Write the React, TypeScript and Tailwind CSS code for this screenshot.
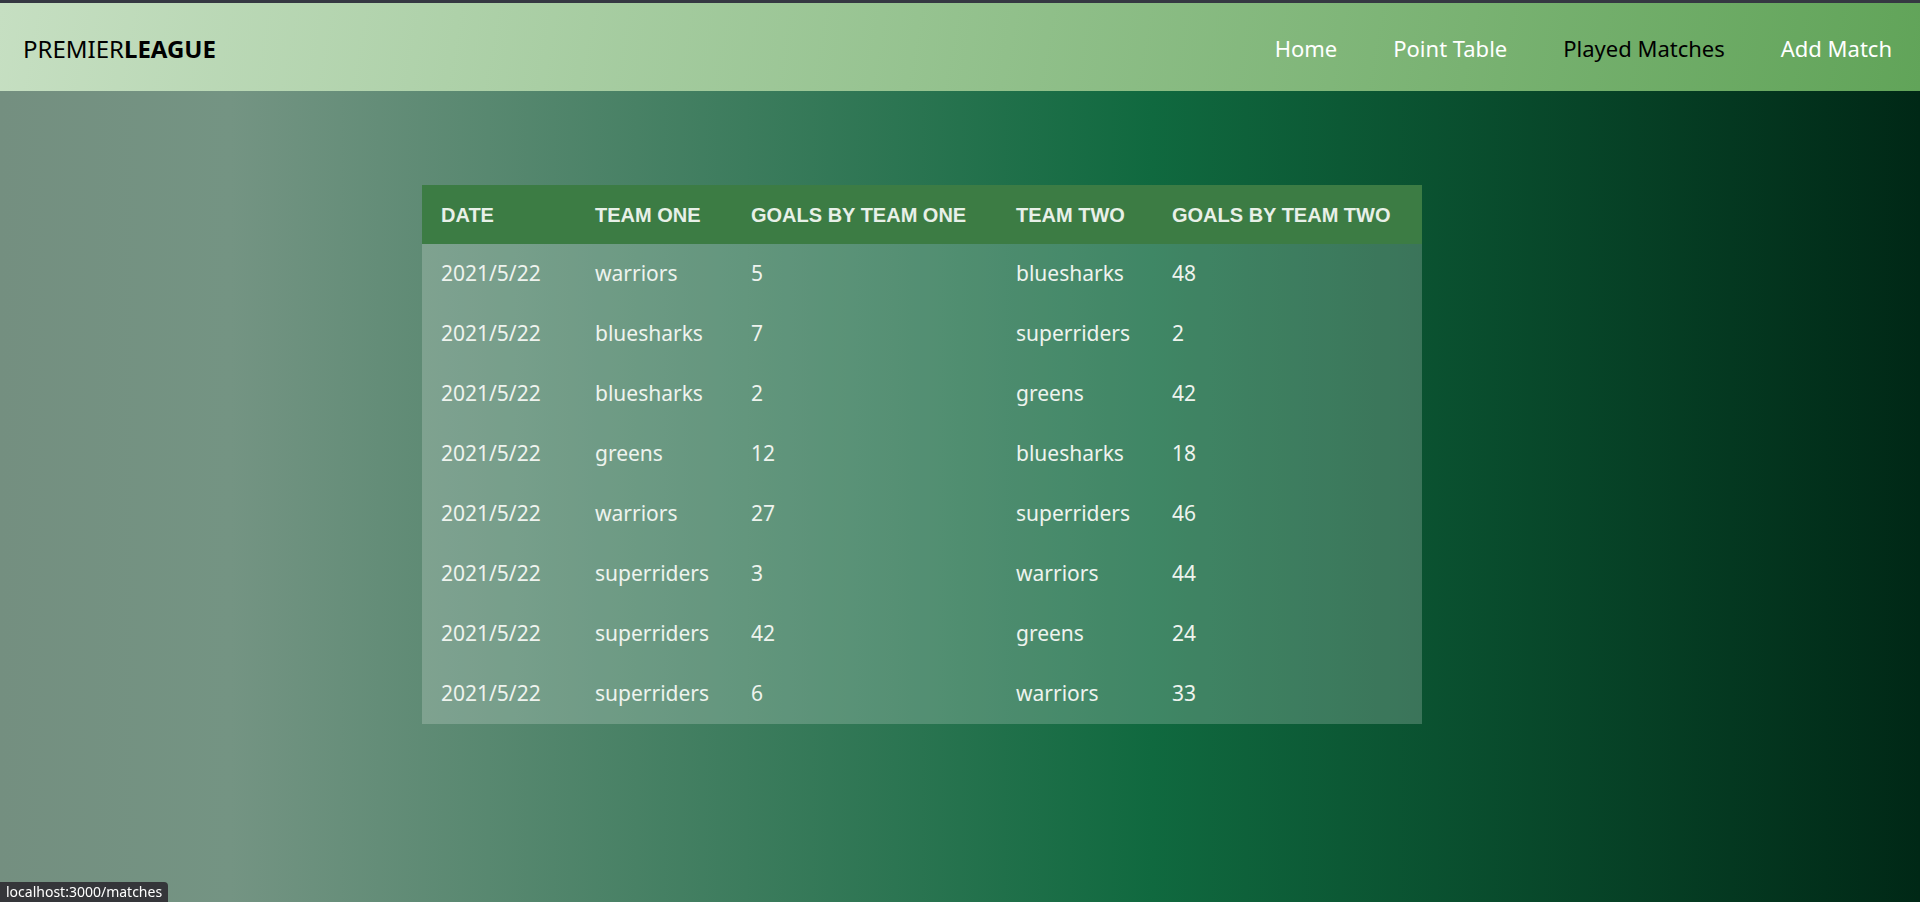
import React from "react";

const rows: string[][] = [
  ["2021/5/22", "warriors", "5", "bluesharks", "48"],
  ["2021/5/22", "bluesharks", "7", "superriders", "2"],
  ["2021/5/22", "bluesharks", "2", "greens", "42"],
  ["2021/5/22", "greens", "12", "bluesharks", "18"],
  ["2021/5/22", "warriors", "27", "superriders", "46"],
  ["2021/5/22", "superriders", "3", "warriors", "44"],
  ["2021/5/22", "superriders", "42", "greens", "24"],
  ["2021/5/22", "superriders", "6", "warriors", "33"],
];

const headers = ["DATE", "TEAM ONE", "GOALS BY TEAM ONE", "TEAM TWO", "GOALS BY TEAM TWO"];
const widths = ["w-[154px]", "w-[156px]", "w-[265px]", "w-[156px]", "w-[269px]"];

export default function App() {
  return (
    <div className="relative min-h-screen w-full overflow-hidden bg-[linear-gradient(90deg,#748f80_0%,#749483_12%,#10693f_60%,#002816_100%)] font-['Noto_Sans',sans-serif]">
      <div className="h-[3px] bg-[#353842]" />
      <nav className="flex h-[88px] items-center justify-between bg-[linear-gradient(100deg,#c6dfc2_0%,#61a459_100%)] pl-[23px] pr-[28px]">
        <div className="text-[24px] leading-none text-black pt-[4px]">
          <span className="font-normal">PREMIER</span>
          <span className="font-bold">LEAGUE</span>
        </div>
        <ul className="flex items-center gap-[56px] text-[22px] leading-none pt-[2px]">
          <li className="text-white">Home</li>
          <li className="text-white">Point Table</li>
          <li className="text-black">Played Matches</li>
          <li className="text-white">Add Match</li>
        </ul>
      </nav>
      <main className="pl-[422px] pt-[94px]">
        <table className="w-[1000px] table-fixed border-collapse">
          <colgroup>
            {widths.map((w, i) => (
              <col key={i} className={w} />
            ))}
          </colgroup>
          <thead>
            <tr className="h-[59px] bg-[#3c7c44]">
              {headers.map((h) => (
                <th
                  key={h}
                  className="pl-[19px] text-left align-middle font-['Liberation_Sans',Arial,sans-serif] text-[20px] font-bold text-[#e8f0e8]"
                >
                  {h}
                </th>
              ))}
            </tr>
          </thead>
          <tbody className="bg-white/20">
            {rows.map((r, i) => (
              <tr key={i} className="h-[60px]">
                {r.map((c, j) => (
                  <td key={j} className="pl-[19px] text-left align-middle text-[21px] text-[#eef3ee]">
                    {c}
                  </td>
                ))}
              </tr>
            ))}
          </tbody>
        </table>
      </main>
      <div className="fixed bottom-0 left-0 h-[20px] rounded-tr-[4px] bg-[#35363a] px-[6px] text-[14px] leading-[20px] text-white">
        localhost:3000/matches
      </div>
    </div>
  );
}
